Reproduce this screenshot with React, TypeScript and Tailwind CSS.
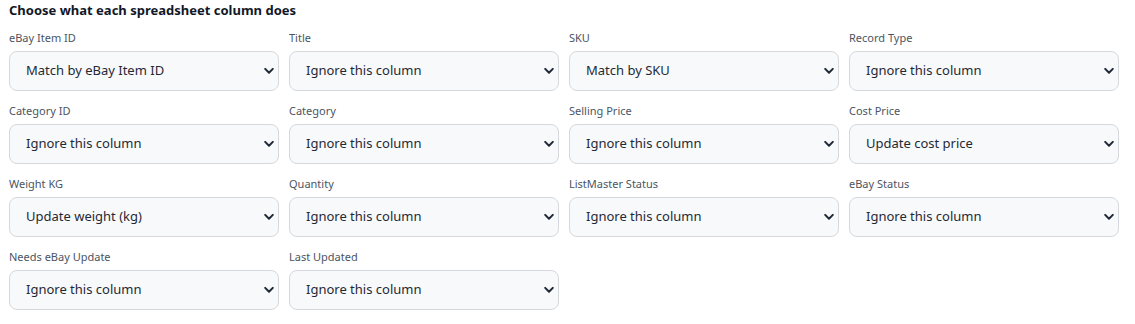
const fields: { label: string; value: string }[] = [
  { label: 'eBay Item ID', value: 'Match by eBay Item ID' },
  { label: 'Title', value: 'Ignore this column' },
  { label: 'SKU', value: 'Match by SKU' },
  { label: 'Record Type', value: 'Ignore this column' },
  { label: 'Category ID', value: 'Ignore this column' },
  { label: 'Category', value: 'Ignore this column' },
  { label: 'Selling Price', value: 'Ignore this column' },
  { label: 'Cost Price', value: 'Update cost price' },
  { label: 'Weight KG', value: 'Update weight (kg)' },
  { label: 'Quantity', value: 'Ignore this column' },
  { label: 'ListMaster Status', value: 'Ignore this column' },
  { label: 'eBay Status', value: 'Ignore this column' },
  { label: 'Needs eBay Update', value: 'Ignore this column' },
  { label: 'Last Updated', value: 'Ignore this column' },
];

function Chevron() {
  return (
    <svg
      width="10"
      height="7"
      viewBox="0 0 10 7"
      className="pointer-events-none absolute right-[5px] top-1/2 -translate-y-1/2 text-[#1f2937]"
      aria-hidden="true"
    >
      <path d="M1.2 1.4 5 5.2 8.8 1.4" fill="none" stroke="currentColor" strokeWidth="2" strokeLinecap="round" strokeLinejoin="round" />
    </svg>
  );
}

export default function App() {
  return (
    <div className="min-h-screen bg-white pl-[9px] pr-[16px] font-['Noto_Sans',sans-serif]">
      <h2 className="text-[13px] leading-5 font-bold text-[#111827]">Choose what each spreadsheet column does</h2>
      <div className="mt-[9px] grid grid-cols-4 gap-x-[10px] gap-y-[11px]">
        {fields.map((field) => (
          <div key={field.label}>
            <label className="block pt-px text-[11px] leading-[15px] text-[#4b5563]">{field.label}</label>
            <div className="relative mt-[6px]">
              <select
                defaultValue={field.value}
                className="h-10 w-full appearance-none rounded-lg border border-[#d5d8dc] bg-[#f8f9fa] pl-4 pr-8 text-[13px] text-[#1f2937] outline-none"
              >
                <option>{field.value}</option>
              </select>
              <Chevron />
            </div>
          </div>
        ))}
      </div>
    </div>
  );
}
